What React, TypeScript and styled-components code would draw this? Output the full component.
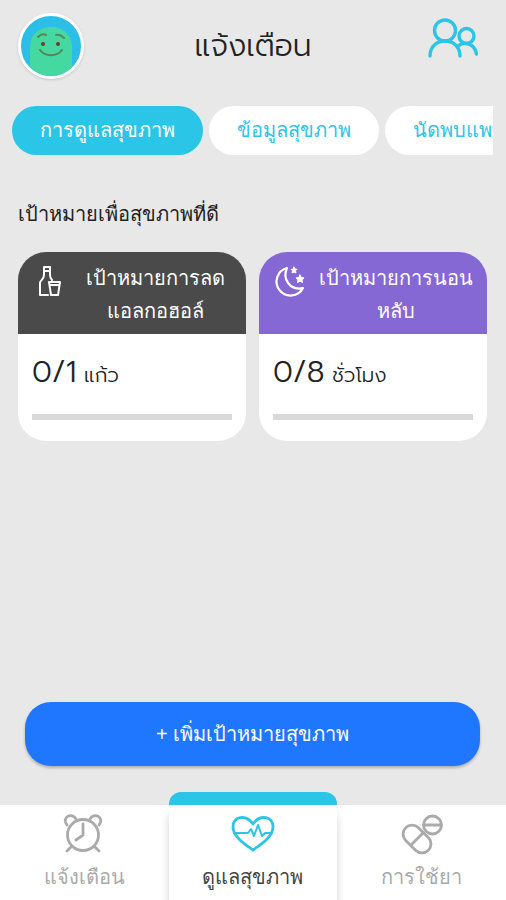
import React from "react";
import styled, { createGlobalStyle } from "styled-components";

const cyan = "#2bc5e8";
const loopless = `Prompt, "Noto Sans Thai", "Noto Sans", sans-serif`;

const GlobalStyle = createGlobalStyle`
  * { box-sizing: border-box; }
  body {
    margin: 0;
    background: #e8e8e8;
    color: #222;
    font-family: "Liberation Sans", sans-serif;
  }
  button { font: inherit; border: 0; padding: 0; cursor: pointer; }
  svg { display: block; flex: none; fill: none; stroke: currentColor; stroke-linecap: round; stroke-linejoin: round; }
  h1, h2, h3, p { margin: 0; font-weight: 400; }
`;

const Screen = styled.div`
  min-height: 100vh;
  display: flex;
  flex-direction: column;
`;

const Header = styled.header`
  display: grid;
  grid-template-columns: 66px 1fr 66px;
  align-items: center;
  height: 92px;
  padding: 0 18px;
`;

const Avatar = styled.button`
  width: 66px;
  height: 66px;
  border: 3px solid #fff;
  border-radius: 50%;
  overflow: hidden;
  background: #2bbfe8;
  box-shadow: 0 1px 3px rgba(0, 0, 0, 0.15);
`;

const Title = styled.h1`
  text-align: center;
  font-family: ${loopless};
  && { font-weight: 300; }
  font-size: 30px;
  line-height: 44px;
`;

const PeopleButton = styled.button`
  justify-self: end;
  margin: 0 10px 16px 0;
  background: none;
  color: ${cyan};
`;

const Tabs = styled.nav`
  display: flex;
  gap: 6px;
  margin: 14px 13px 0 12px;
  overflow: hidden;
`;

const Tab = styled.button<{ $active?: boolean }>`
  flex: none;
  height: 49px;
  padding: 0 28px;
  border-radius: 25px;
  font-size: 20px;
  line-height: 49px;
  white-space: nowrap;
  color: ${(p) => (p.$active ? "#fff" : cyan)};
  background: ${(p) => (p.$active ? cyan : "#fff")};
`;

const Content = styled.main`
  flex: 1;
  padding: 42px 19px 0 18px;
`;

const SectionTitle = styled.h2`
  font-size: 20px;
  line-height: 34px;
`;

const Cards = styled.div`
  display: grid;
  grid-template-columns: 1fr 1fr;
  gap: 13px;
  margin-top: 21px;
`;

const Card = styled.article`
  border-radius: 28px;
  overflow: hidden;
  background: #fff;
`;

const CardHead = styled.div<{ $color: string }>`
  display: flex;
  align-items: flex-start;
  height: 82px;
  padding: 10px 2px 0 14px;
  color: #fff;
  background: ${(p) => p.$color};
`;

const CardTitle = styled.h3`
  flex: 1;
  text-align: center;
  font-size: 20px;
  line-height: 33px;
`;

const CardBody = styled.div`
  height: 107px;
  padding: 18px 14px 0;
`;

const Amount = styled.p`
  height: 40px;
  font-family: ${loopless};
  && { font-weight: 300; }
  font-size: 20px;
  line-height: 40px;
`;

const Value = styled.span`
  font-size: 30px;
`;

const Progress = styled.progress`
  appearance: none;
  display: block;
  width: 100%;
  height: 6px;
  margin-top: 22px;
  border: 0;
  background: #d9d9d9;
  &::-webkit-progress-bar { background: #d9d9d9; }
  &::-webkit-progress-value { background: ${cyan}; }
`;

const AddButton = styled.button`
  height: 64px;
  margin: 0 26px 26px 25px;
  border-radius: 26px;
  font-size: 20px;
  color: #fff;
  background: #1f76ff;
  box-shadow: 0 2px 3px rgba(0, 0, 0, 0.25);
`;

const BottomNav = styled.nav`
  display: grid;
  grid-template-columns: repeat(3, 1fr);
  align-items: end;
  background: linear-gradient(#e8e8e8 13px, #fff 13px);
`;

const NavItem = styled.button<{ $active?: boolean }>`
  display: flex;
  flex-direction: column;
  align-items: center;
  height: ${(p) => (p.$active ? 108 : 95)}px;
  padding-top: 9px;
  border-top: ${(p) => (p.$active ? `13px solid ${cyan}` : "0")};
  border-radius: ${(p) => (p.$active ? "12px 12px 0 0" : "0")};
  background: #fff;
  color: ${(p) => (p.$active ? cyan : "#aaa")};
  box-shadow: ${(p) => (p.$active ? "0 18px 8px rgba(0, 0, 0, 0.18)" : "none")};
  z-index: ${(p) => (p.$active ? 1 : 0)};
`;

const NavLabel = styled.span<{ $active?: boolean }>`
  margin-top: 4px;
  font-size: 20px;
  line-height: 34px;
  color: ${(p) => (p.$active ? "#444" : "#aaa")};
`;

const Face = () => (
  <svg width="60" height="60" viewBox="0 0 60 60">
    <path d="M9 64V31C9 19 18 11 30 11s21 8 21 20v33z" fill="#45d8a0" stroke="none" />
    <g stroke="#558754" strokeWidth="2">
      <path d="M17 21q4-4 8-2M35 19q4-1 8 3M19 34c5 7 17 7 22 0" />
    </g>
    <g fill="#70382a" stroke="none">
      <circle cx="22" cy="28" r="2" />
      <circle cx="37" cy="28" r="2" />
    </g>
  </svg>
);

const People = () => (
  <svg width="50" height="40" viewBox="0 0 50 40" strokeWidth="3.4">
    <circle cx="17" cy="12.500" r="10.500" />
    <circle cx="38.500" cy="18" r="7.500" />
    <path d="M2 38c0-20 30-20 30 0M29 29c7-7 18-3 19.500 7" />
  </svg>
);

const Bottle = () => (
  <svg width="34" height="40" viewBox="0 0 34 40" strokeWidth="2">
    <path d="M16 33H8V21c0-3 4-3 4-8V5h6v8c0 3 1 4 2 5M12 9h6M17 20h11l-2 13h-7zM18 23h9" />
  </svg>
);

const Moon = () => (
  <svg width="34" height="40" viewBox="0 0 34 40" strokeWidth="2.2">
    <path d="M14 6c-5 11 3 23 16 20A14 14 0 1 1 14 6z" />
    <g fill="currentColor" strokeWidth="1">
      <path d="m21 5 1 2 2 .3-1.500 1.500.5 2.200-2-1-2 1 .5-2.200L18 7.300 20 7z" />
      <path d="m27 13 1.300 2.500 2.700.4-2 2 .5 2.600-2.500-1.300-2.500 1.300.5-2.600-2-2 2.700-.4z" />
    </g>
  </svg>
);

const Clock = () => (
  <svg width="42" height="42" viewBox="0 0 42 42" strokeWidth="2.8">
    <circle cx="20" cy="21" r="15.500" />
    <path d="M20 10v11l-7 5M8 33l-4 4M32 33l4 4M4 11c-6-8 5-13 9-6M36 11c6-8-5-13-9-6" />
  </svg>
);

const Heart = () => (
  <svg width="44" height="42" viewBox="0 0 44 42" strokeWidth="2.8">
    <path d="M22 36C15 31 2 23 2 13 2 2 15 0 22 10 29 0 42 2 42 13c0 10-13 18-20 23z" />
    <path strokeWidth="2" d="M3 19h14l3-4 3 7 4-11 4 11 3-3h7" />
  </svg>
);

const Pills = () => (
  <svg width="42" height="42" viewBox="0 0 42 42" strokeWidth="2.8">
    <rect x="-16" y="-9" width="32" height="18" rx="9" transform="translate(16 25) rotate(45)" />
    <path d="m22 19-12 12M23 11h17" />
    <circle cx="31.500" cy="11" r="9" />
  </svg>
);

const goals = [
  { title: "เป้าหมายการลดแอลกอฮอล์", lines: ["เป้าหมายการลด", "แอลกอฮอล์"], color: "#4a4a4a", icon: <Bottle />, value: "0/1", unit: "แก้ว", max: 1 },
  { title: "เป้าหมายการนอนหลับ", lines: ["เป้าหมายการนอน", "หลับ"], color: "#8668d5", icon: <Moon />, value: "0/8", unit: "ชั่วโมง", max: 8 },
];

export default function App() {
  return (
    <Screen>
      <GlobalStyle />
      <Header>
        <Avatar aria-label="โปรไฟล์"><Face /></Avatar>
        <Title>แจ้งเตือน</Title>
        <PeopleButton aria-label="เพื่อน"><People /></PeopleButton>
      </Header>
      <Tabs>
        <Tab $active>การดูแลสุขภาพ</Tab>
        <Tab>ข้อมูลสุขภาพ</Tab>
        <Tab>นัดพบแพทย์</Tab>
      </Tabs>
      <Content>
        <SectionTitle>เป้าหมายเพื่อสุขภาพที่ดี</SectionTitle>
        <Cards>
          {goals.map((g) => (
            <Card key={g.title}>
              <CardHead $color={g.color}>
                {g.icon}
                <CardTitle>{g.lines[0]}<br />{g.lines[1]}</CardTitle>
              </CardHead>
              <CardBody>
                <Amount><Value>{g.value}</Value> {g.unit}</Amount>
                <Progress aria-label={g.title} value={0} max={g.max} />
              </CardBody>
            </Card>
          ))}
        </Cards>
      </Content>
      <AddButton>+ เพิ่มเป้าหมายสุขภาพ</AddButton>
      <BottomNav>
        <NavItem><Clock /><NavLabel>แจ้งเตือน</NavLabel></NavItem>
        <NavItem $active aria-current="page"><Heart /><NavLabel $active>ดูแลสุขภาพ</NavLabel></NavItem>
        <NavItem><Pills /><NavLabel>การใช้ยา</NavLabel></NavItem>
      </BottomNav>
    </Screen>
  );
}
